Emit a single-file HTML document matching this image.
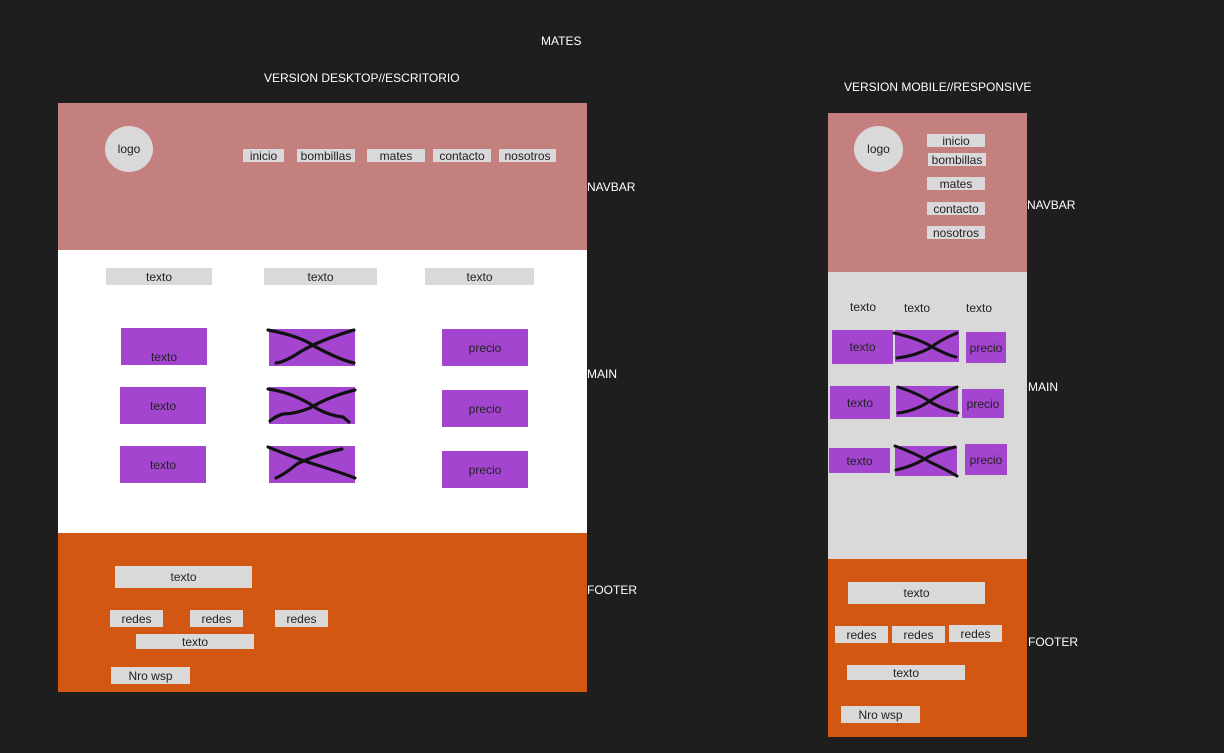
<!DOCTYPE html>
<html><head><meta charset="utf-8"><style>
body{margin:0;width:1224px;height:753px;background:#1e1e1e;position:relative;overflow:hidden;font-family:"Liberation Sans",sans-serif;}
div{position:absolute;box-sizing:border-box}
.l{color:#fff;font-size:12px;white-space:nowrap;line-height:14px}
.g{background:#d9d9d9;color:#222;font-size:12px;display:flex;align-items:center;justify-content:center;line-height:1}
.p{background:#a445d0;color:#222;font-size:12px;display:flex;align-items:center;justify-content:center}
.c{border-radius:50%}
.t{color:#222;font-size:12px}
svg{position:absolute}
</style></head><body>
<div class="l" style="left:541px;top:34px">MATES</div>
<div class="l" style="left:264px;top:71px">VERSION DESKTOP//ESCRITORIO</div>
<div class="l" style="left:844px;top:80px">VERSION MOBILE//RESPONSIVE</div>
<div class="l" style="left:587px;top:180px">NAVBAR</div>
<div class="l" style="left:587px;top:367px">MAIN</div>
<div class="l" style="left:587px;top:583px">FOOTER</div>
<div class="l" style="left:1027px;top:198px">NAVBAR</div>
<div class="l" style="left:1028px;top:380px">MAIN</div>
<div class="l" style="left:1028px;top:635px">FOOTER</div>

<!-- desktop -->
<div style="left:58px;top:103px;width:529px;height:147px;background:#c47f7f"></div>
<div style="left:58px;top:250px;width:529px;height:283px;background:#fff"></div>
<div style="left:58px;top:533px;width:529px;height:159px;background:#d15713"></div>
<div class="g c" style="left:105px;top:126px;width:48px;height:46px">logo</div>
<div class="g" style="left:243px;top:149px;width:41px;height:13px">inicio</div>
<div class="g" style="left:297px;top:149px;width:58px;height:13px">bombillas</div>
<div class="g" style="left:367px;top:149px;width:58px;height:13px">mates</div>
<div class="g" style="left:433px;top:149px;width:58px;height:13px">contacto</div>
<div class="g" style="left:499px;top:149px;width:57px;height:13px">nosotros</div>
<div class="g" style="left:106px;top:268px;width:106px;height:17px">texto</div>
<div class="g" style="left:264px;top:268px;width:113px;height:17px">texto</div>
<div class="g" style="left:425px;top:268px;width:109px;height:17px">texto</div>
<div class="p" style="left:121px;top:328px;width:86px;height:37px;align-items:flex-end;padding-bottom:1px">texto</div>
<div class="p" style="left:120px;top:387px;width:86px;height:37px">texto</div>
<div class="p" style="left:120px;top:446px;width:86px;height:37px">texto</div>
<div class="p" style="left:269px;top:329px;width:86px;height:37px"></div>
<div class="p" style="left:269px;top:387px;width:86px;height:37px"></div>
<div class="p" style="left:269px;top:446px;width:86px;height:37px"></div>
<svg width="1224" height="753" style="left:0;top:0" fill="none" stroke="#111" stroke-width="3" stroke-linecap="round">
<path d="M268 330 Q300 336 314 346 Q340 360 354 363"/><path d="M354 330 Q320 340 300 352 Q285 362 276 363"/>
<path d="M268 389 Q290 392 310 404 Q325 415 343 417 L349 422"/><path d="M355 390 Q330 396 310 408 Q295 414 283 414 Q276 416 270 421"/>
<path d="M268 447 Q300 460 320 466 Q345 474 355 478"/><path d="M342 449 Q315 455 297 464 Q285 474 276 478"/>
<path d="M894 333 Q920 339 932 347 Q950 356 956 357"/><path d="M957 333 Q940 340 930 348 Q915 356 897 358"/>
<path d="M898 387 Q920 394 932 403 Q945 410 958 413"/><path d="M957 387 Q940 394 930 401 Q915 411 898 413"/>
<path d="M895 446 Q915 453 930 462 Q945 469 957 476"/><path d="M955 447 Q935 452 923 460 Q910 467 896 470"/>
</svg>
<div class="p" style="left:442px;top:329px;width:86px;height:37px">precio</div>
<div class="p" style="left:442px;top:390px;width:86px;height:37px">precio</div>
<div class="p" style="left:442px;top:451px;width:86px;height:37px">precio</div>
<div class="g" style="left:115px;top:566px;width:137px;height:22px">texto</div>
<div class="g" style="left:110px;top:610px;width:53px;height:17px">redes</div>
<div class="g" style="left:190px;top:610px;width:53px;height:17px">redes</div>
<div class="g" style="left:275px;top:610px;width:53px;height:17px">redes</div>
<div class="g" style="left:136px;top:634px;width:118px;height:15px">texto</div>
<div class="g" style="left:111px;top:667px;width:79px;height:17px">Nro wsp</div>

<!-- mobile -->
<div style="left:828px;top:113px;width:199px;height:159px;background:#c47f7f"></div>
<div style="left:828px;top:272px;width:199px;height:287px;background:#d9d9d9"></div>
<div style="left:828px;top:559px;width:199px;height:178px;background:#d15713"></div>
<div class="g c" style="left:854px;top:126px;width:49px;height:46px">logo</div>
<div class="g" style="left:927px;top:134px;width:58px;height:13px">inicio</div>
<div class="g" style="left:928px;top:153px;width:58px;height:13px">bombillas</div>
<div class="g" style="left:927px;top:177px;width:58px;height:13px">mates</div>
<div class="g" style="left:927px;top:202px;width:58px;height:13px">contacto</div>
<div class="g" style="left:927px;top:226px;width:58px;height:13px">nosotros</div>
<div class="t" style="left:850px;top:300px">texto</div>
<div class="t" style="left:904px;top:301px">texto</div>
<div class="t" style="left:966px;top:301px">texto</div>
<div class="p" style="left:832px;top:330px;width:61px;height:34px">texto</div>
<div class="p" style="left:830px;top:386px;width:60px;height:33px">texto</div>
<div class="p" style="left:829px;top:448px;width:61px;height:25px">texto</div>
<div class="p" style="left:895px;top:330px;width:64px;height:32px;z-index:-0"></div>
<div class="p" style="left:896px;top:386px;width:62px;height:31px"></div>
<div class="p" style="left:895px;top:446px;width:62px;height:30px"></div>
<div class="p" style="left:966px;top:332px;width:40px;height:31px">precio</div>
<div class="p" style="left:962px;top:389px;width:42px;height:29px">precio</div>
<div class="p" style="left:965px;top:444px;width:42px;height:31px">precio</div>
<div class="g" style="left:848px;top:582px;width:137px;height:22px">texto</div>
<div class="g" style="left:835px;top:626px;width:53px;height:17px">redes</div>
<div class="g" style="left:892px;top:626px;width:53px;height:17px">redes</div>
<div class="g" style="left:949px;top:625px;width:53px;height:17px">redes</div>
<div class="g" style="left:847px;top:665px;width:118px;height:15px">texto</div>
<div class="g" style="left:841px;top:706px;width:79px;height:17px">Nro wsp</div>
<svg width="1224" height="753" style="left:0;top:0" fill="none" stroke="#111" stroke-width="3" stroke-linecap="round">
<path d="M268 330 Q300 336 314 346 Q340 360 354 363"/><path d="M354 330 Q320 340 300 352 Q285 362 276 363"/>
<path d="M268 389 Q290 392 310 404 Q325 415 343 417 L349 422"/><path d="M355 390 Q330 396 310 408 Q295 414 283 414 Q276 416 270 421"/>
<path d="M268 447 Q300 460 320 466 Q345 474 355 478"/><path d="M342 449 Q315 455 297 464 Q285 474 276 478"/>
<path d="M894 333 Q920 339 932 347 Q950 356 956 357"/><path d="M957 333 Q940 340 930 348 Q915 356 897 358"/>
<path d="M898 387 Q920 394 932 403 Q945 410 958 413"/><path d="M957 387 Q940 394 930 401 Q915 411 898 413"/>
<path d="M895 446 Q915 453 930 462 Q945 469 957 476"/><path d="M955 447 Q935 452 923 460 Q910 467 896 470"/>
</svg>
</body></html>
